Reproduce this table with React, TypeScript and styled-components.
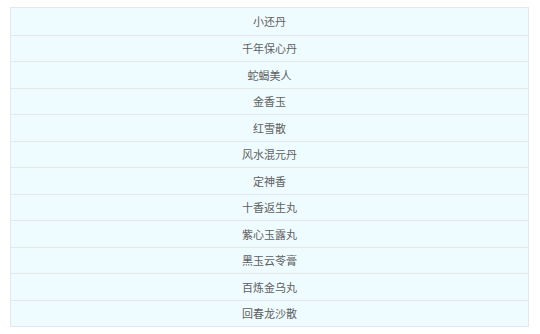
import React from "react";
import styled, { createGlobalStyle } from "styled-components";

const Global = createGlobalStyle`
  html, body { margin: 0; padding: 0; background: #ffffff; }
  body { font-family: "Noto Sans CJK SC", "Noto Sans", sans-serif; }
`;

const Page = styled.div`
  padding: 7px 11px 0 10px;
`;

const List = styled.div`
  display: flex;
  flex-direction: column;
  border: 1px solid #e3e8e8;
  background: #effcff;
`;

const Row = styled.div<{ $first?: boolean }>`
  height: 26.5px;
  box-sizing: border-box;
  display: flex;
  align-items: center;
  justify-content: center;
  border-top: ${(p) => (p.$first ? "none" : "1px solid #e3e8e8")};
  font-size: 11px;
  color: #606060;
`;

const items = [
  "小还丹",
  "千年保心丹",
  "蛇蝎美人",
  "金香玉",
  "红雪散",
  "风水混元丹",
  "定神香",
  "十香返生丸",
  "紫心玉露丸",
  "黑玉云苓膏",
  "百炼金乌丸",
  "回春龙沙散",
];

export default function App() {
  return (
    <Page>
      <Global />
      <List>
        {items.map((t, i) => (
          <Row key={t} $first={i === 0}>
            {t}
          </Row>
        ))}
      </List>
    </Page>
  );
}
